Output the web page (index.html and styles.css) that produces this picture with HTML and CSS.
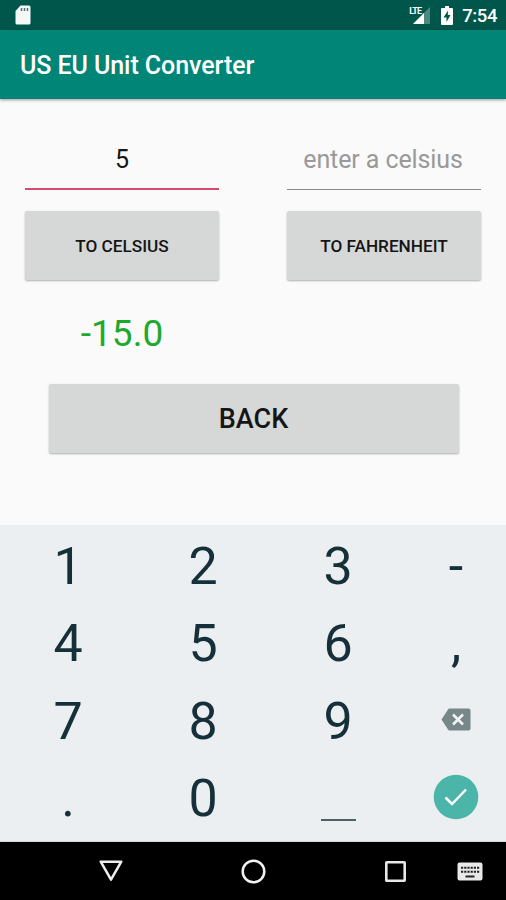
FILE: index.html
```html
<!DOCTYPE html>
<html lang="en">
<head>
<meta charset="utf-8">
<title>US EU Unit Converter</title>
<link rel="stylesheet" href="styles.css">
</head>
<body>
<div class="screen">
  <header class="status">
    <svg class="sd" width="16" height="20" viewBox="0 0 16 20"><path fill="#f4f8f7" d="M5.500.5H14q1.500 0 1.500 1.500v16q0 1.500-1.500 1.500H2q-1.500 0-1.500-1.500V6z"/><path stroke="#55706b" stroke-width="1.500" d="M6.500 3v3M9.500 3v3M12.500 3v3"/></svg>
    <div class="indicators">
      <div class="signal">
        <svg width="22" height="20" viewBox="0 0 22 20"><path fill="#4b8880" d="M21 2v17H4z"/><path fill="#fff" d="M15 8v11H4z"/></svg>
        <span class="lte">LTE</span>
      </div>
      <svg class="battery" width="12" height="19" viewBox="0 0 12 19"><path fill="#fff" d="M4 0h4v2h3q1 0 1 1v15q0 1-1 1H1q-1 0-1-1V3q0-1 1-1h3z"/><path fill="#00564b" d="M7 4.500 2.500 11.500H5.500V16L9.500 9H6.800z"/></svg>
      <time class="clock">7:54</time>
    </div>
  </header>
  <div class="toolbar"><h1 class="title">US EU Unit Converter</h1></div>
  <main class="content">
    <div class="converters">
      <section class="converter">
        <div class="field focused">5</div>
        <button class="button">TO CELSIUS</button>
        <output class="result">-15.0</output>
      </section>
      <section class="converter">
        <div class="field hint">enter a celsius</div>
        <button class="button">TO FAHRENHEIT</button>
      </section>
    </div>
    <button class="button back">BACK</button>
  </main>
  <div class="keypad">
    <span>1</span><span>2</span><span>3</span><span class="minus">-</span>
    <span>4</span><span>5</span><span>6</span><span>,</span>
    <span>7</span><span>8</span><span>9</span>
    <span class="action"><svg width="30" height="23" viewBox="0 0 30 23"><path fill="#78878a" d="M8.500.5H27.500Q29.500.5 29.500 2.500v18q0 2-2 2H8.500Q7.500 22.500 7 21.500L.5 11.500 7 1.500Q7.500.5 8.500.5z"/><path stroke="#f2f5f6" stroke-width="2.500" d="m12 6.500 10 10m0-10-10 10"/></svg></span>
    <span>.</span><span>0</span>
    <span><svg class="space" width="35" height="2" viewBox="0 0 35 2"><path fill="#4b6067" d="M0 0h35v2H0z"/></svg></span>
    <span class="action"><svg width="46" height="46" viewBox="0 0 46 46"><circle cx="23" cy="23" r="22.300" fill="#4cb5a9"/><path fill="none" stroke="#fff" stroke-width="2.500" d="m12.500 23.500 6.500 6.500 14-14.500"/></svg></span>
  </div>
  <nav class="nav">
    <svg width="24" height="22" viewBox="0 0 24 22"><path fill="none" stroke="#eee" stroke-width="2.500" stroke-linejoin="round" d="M1.700 1.700h20.600L12 19.700z"/></svg>
    <svg width="25" height="25" viewBox="0 0 25 25"><circle cx="12.500" cy="12.500" r="10.800" fill="none" stroke="#f2f2f2" stroke-width="2.500"/></svg>
    <svg width="21" height="21" viewBox="0 0 21 21"><rect x="1.300" y="1.300" width="18.400" height="18.400" rx=".5" fill="none" stroke="#e8e8e8" stroke-width="2.600"/></svg>
    <svg width="26" height="19" viewBox="0 0 26 19"><rect x=".5" y=".5" width="25" height="18" rx="2" fill="#e8e8e8"/><path stroke="#222" stroke-width="2" stroke-dasharray="2.200 1" d="M4 5.800h18.500M4 9.800h18.500"/><path stroke="#222" stroke-width="2" d="M8.500 14.500h9"/></svg>
  </nav>
</div>
</body>
</html>
```
FILE: styles.css
```css
* { box-sizing: border-box; }
body { margin: 0; font-family: Roboto, sans-serif; background: #fafafa; }
svg { display: block; flex: none; }
.screen { width: 506px; height: 900px; display: flex; flex-direction: column; overflow: hidden; }
.status { height: 30px; flex: none; background: #00564b; display: flex; justify-content: space-between; padding: 5px 9px 0 15px; }
.indicators { display: flex; }
.signal { position: relative; margin-right: 10px; }
.lte { position: absolute; left: 0; top: 1px; font-size: 9px; line-height: 10px; font-weight: 700; letter-spacing: -.8px; color: #fff; }
.battery { margin: 1px 9px 0 0; }
.clock { font-size: 18.500px; line-height: 22px; font-weight: 500; letter-spacing: -.4px; color: #fff; }
.toolbar { height: 69px; flex: none; background: #008577; display: flex; align-items: center; padding: 2px 20px 0; box-shadow: 0 1px 3px rgba(0,0,0,.4); z-index: 1; }
.title { margin: 0; font-size: 25px; font-weight: 500; letter-spacing: -.07px; color: #fff; white-space: nowrap; }
.content { height: 426px; flex: none; background: #fafafa; padding: 33px 25px 0; }
.converters { display: flex; justify-content: space-between; height: 252px; }
.converter { width: 194px; display: flex; flex-direction: column; }
.field { height: 58px; line-height: 56px; margin-bottom: 21px; text-align: center; font-size: 25px; color: #171717; border-bottom: 1px solid #888; }
.field.focused { border-bottom: 2px solid #d64a70; }
.hint { color: #999; letter-spacing: -.1px; padding-right: 2px; }
.button { display: block; width: 100%; height: 69px; flex: none; border: 0; border-radius: 2px; padding: 0; background: #d6d8d7; box-shadow: 0 1px 2px rgba(0,0,0,.3); font: 500 17.200px Roboto, sans-serif; color: #151515; }
.result { margin-top: 31px; line-height: 46px; text-align: center; font-size: 37px; color: #1fa82c; }
.back { width: 410px; margin: 0 24px; padding-right: 1px; font-size: 27px; }
.keypad { height: 317px; flex: none; background: #eceff1; display: grid; grid-template-columns: 135px 135px 135px 101px; grid-template-rows: repeat(4, 77.300px); padding: 3px 0 0 .5px; font-size: 52px; color: #16303a; border-bottom: 1px solid #d5d8da; }
.keypad span { display: flex; align-items: center; justify-content: center; line-height: 77px; }
.keypad .action { padding-bottom: 3px; }
.keypad .space { margin-top: 42px; }
.nav { height: 58px; flex: none; background: #000; display: flex; align-items: center; padding-left: 99px; }
.nav svg:nth-child(2) { margin-left: 118px; }
.nav svg:nth-child(3) { margin-left: 119px; }
.nav svg:nth-child(4) { margin-left: 51px; }
```
